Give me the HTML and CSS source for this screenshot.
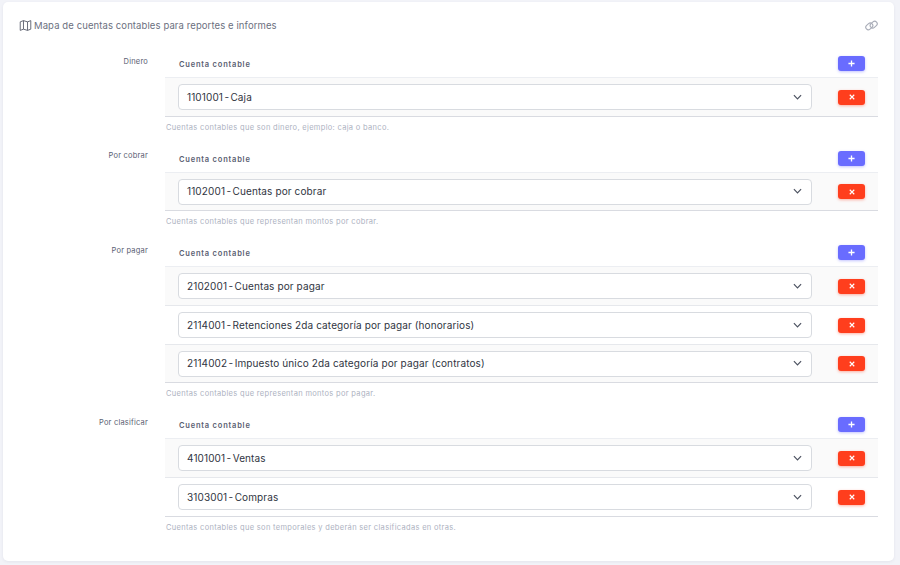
FILE: index.html
```html
<!DOCTYPE html>
<html lang="en">
<head>
    <meta charset="UTF-8">
    <title>Mapa de cuentas contables</title>
    <link rel="stylesheet" href="styles.css">
</head>
<body>

<div class="card">
    <div class="card-head">
        <h5>
            <svg class="map-icon" viewBox="0 0 16 16" width="13" height="13"><path d="M1.5 3.5 5.5 2 10.5 3.5 14.5 2V12.5L10.5 14 5.5 12.5 1.5 14ZM5.5 2V12.5M10.5 3.5V14" fill="none" stroke="currentColor" stroke-width="1.1" stroke-linejoin="round"/></svg>
            Mapa de cuentas contables para reportes e informes
        </h5>
        <svg class="link-icon" viewBox="0 0 16 16" width="13" height="13"><g fill="none" stroke="currentColor" stroke-width="1.4"><rect x="0.6" y="6" width="9.4" height="6.2" rx="3.1" transform="rotate(-42 5.3 9.1)"/><rect x="6" y="3.8" width="9.4" height="6.2" rx="3.1" transform="rotate(-42 10.7 6.9)"/></g></svg>
    </div>

    <div class="group">
        <label class="group-label">Dinero</label>
        <div class="group-body">
            <div class="head-row">
                <span>Cuenta contable</span>
                <div class="action"><button class="btn btn-add"><svg viewBox="0 0 8 8" width="7" height="7"><path d="M4 .5v7M.5 4h7"/></svg></button></div>
            </div>
            <div class="item-row">
                <div class="select"><span>1101001<span class="dash"> - </span>Caja</span><svg class="chevron" viewBox="0 0 10 6" width="9" height="6"><path d="M1 1l4 4 4-4"/></svg></div>
                <div class="action"><button class="btn btn-del"><svg viewBox="0 0 8 8" width="6" height="6"><path d="M1 1l6 6M7 1l-6 6"/></svg></button></div>
            </div>
            <p class="help">Cuentas contables que son dinero, ejemplo: caja o banco.</p>
        </div>
    </div>

    <div class="group">
        <label class="group-label">Por cobrar</label>
        <div class="group-body">
            <div class="head-row">
                <span>Cuenta contable</span>
                <div class="action"><button class="btn btn-add"><svg viewBox="0 0 8 8" width="7" height="7"><path d="M4 .5v7M.5 4h7"/></svg></button></div>
            </div>
            <div class="item-row">
                <div class="select"><span>1102001<span class="dash"> - </span>Cuentas por cobrar</span><svg class="chevron" viewBox="0 0 10 6" width="9" height="6"><path d="M1 1l4 4 4-4"/></svg></div>
                <div class="action"><button class="btn btn-del"><svg viewBox="0 0 8 8" width="6" height="6"><path d="M1 1l6 6M7 1l-6 6"/></svg></button></div>
            </div>
            <p class="help">Cuentas contables que representan montos por cobrar.</p>
        </div>
    </div>

    <div class="group">
        <label class="group-label">Por pagar</label>
        <div class="group-body">
            <div class="head-row">
                <span>Cuenta contable</span>
                <div class="action"><button class="btn btn-add"><svg viewBox="0 0 8 8" width="7" height="7"><path d="M4 .5v7M.5 4h7"/></svg></button></div>
            </div>
            <div class="item-row">
                <div class="select"><span>2102001<span class="dash"> - </span>Cuentas por pagar</span><svg class="chevron" viewBox="0 0 10 6" width="9" height="6"><path d="M1 1l4 4 4-4"/></svg></div>
                <div class="action"><button class="btn btn-del"><svg viewBox="0 0 8 8" width="6" height="6"><path d="M1 1l6 6M7 1l-6 6"/></svg></button></div>
            </div>
            <div class="item-row">
                <div class="select"><span>2114001<span class="dash"> - </span>Retenciones 2da categoría por pagar (honorarios)</span><svg class="chevron" viewBox="0 0 10 6" width="9" height="6"><path d="M1 1l4 4 4-4"/></svg></div>
                <div class="action"><button class="btn btn-del"><svg viewBox="0 0 8 8" width="6" height="6"><path d="M1 1l6 6M7 1l-6 6"/></svg></button></div>
            </div>
            <div class="item-row">
                <div class="select"><span>2114002<span class="dash"> - </span>Impuesto único 2da categoría por pagar (contratos)</span><svg class="chevron" viewBox="0 0 10 6" width="9" height="6"><path d="M1 1l4 4 4-4"/></svg></div>
                <div class="action"><button class="btn btn-del"><svg viewBox="0 0 8 8" width="6" height="6"><path d="M1 1l6 6M7 1l-6 6"/></svg></button></div>
            </div>
            <p class="help">Cuentas contables que representan montos por pagar.</p>
        </div>
    </div>

    <div class="group">
        <label class="group-label">Por clasificar</label>
        <div class="group-body">
            <div class="head-row">
                <span>Cuenta contable</span>
                <div class="action"><button class="btn btn-add"><svg viewBox="0 0 8 8" width="7" height="7"><path d="M4 .5v7M.5 4h7"/></svg></button></div>
            </div>
            <div class="item-row">
                <div class="select"><span>4101001<span class="dash"> - </span>Ventas</span><svg class="chevron" viewBox="0 0 10 6" width="9" height="6"><path d="M1 1l4 4 4-4"/></svg></div>
                <div class="action"><button class="btn btn-del"><svg viewBox="0 0 8 8" width="6" height="6"><path d="M1 1l6 6M7 1l-6 6"/></svg></button></div>
            </div>
            <div class="item-row">
                <div class="select"><span>3103001<span class="dash"> - </span>Compras</span><svg class="chevron" viewBox="0 0 10 6" width="9" height="6"><path d="M1 1l4 4 4-4"/></svg></div>
                <div class="action"><button class="btn btn-del"><svg viewBox="0 0 8 8" width="6" height="6"><path d="M1 1l6 6M7 1l-6 6"/></svg></button></div>
            </div>
            <p class="help">Cuentas contables que son temporales y deberán ser clasificadas en otras.</p>
        </div>
    </div>
</div>

</body>
</html>
```

FILE: styles.css
```css
body {
    font-family: Inter, "Noto Sans", sans-serif;
    background-color: #f2f3f8;
    margin: 0;
    padding: 2px 6px 4px 3px;
    height: 565px;
    box-sizing: border-box;
    overflow: hidden;
}

.card {
    background-color: #fff;
    border-radius: 5px;
    height: 559px;
    padding: 0 16px;
    box-sizing: border-box;
    box-shadow: 0 1px 3px rgba(60,70,100,0.08);
}

.card-head {
    display: flex;
    justify-content: space-between;
    align-items: center;
    height: 46px;
    margin-bottom: 2px;
}

.card-head h5 {
    display: flex;
    align-items: center;
    gap: 2px;
    margin: 0;
    font-size: 9.5px;
    font-weight: 400;
    letter-spacing: 0.1px;
    color: #6b7080;
}

.map-icon {
    color: #565b6a;
}

.link-icon {
    color: #a9adb8;
}

.group {
    display: flex;
}

.group-label {
    width: 129px;
    text-align: right;
    font-size: 7.5px;
    letter-spacing: 0.2px;
    color: #5a6072;
    padding-top: 6.5px;
    flex-shrink: 0;
}

.group-body {
    margin-left: 17px;
    width: 713px;
}

.head-row {
    display: flex;
    align-items: center;
    justify-content: space-between;
    height: 28px;
    box-sizing: border-box;
    padding-left: 14px;
    font-size: 7.5px;
    font-weight: 600;
    letter-spacing: 0.8px;
    color: #5a6072;
    border-bottom: 1px solid #eceef2;
}

.head-row > span {
    padding-top: 2px;
}

.item-row {
    display: flex;
    align-items: center;
    justify-content: space-between;
    height: 38.75px;
    box-sizing: border-box;
    padding: 1px 0 0 13px;
    border-bottom: 1px solid #e6e8ec;
}

.item-row:nth-child(even) {
    background-color: #fafafa;
}

.item-row:nth-last-child(2) {
    border-bottom-color: #d9dbe1;
}

.select {
    display: flex;
    align-items: center;
    justify-content: space-between;
    width: 634px;
    height: 26px;
    box-sizing: border-box;
    padding: 0 9px 1px 8px;
    background-color: #fff;
    border: 1px solid #d8dbe0;
    border-radius: 4px;
    font-size: 10px;
    letter-spacing: 0.12px;
    color: #2f3542;
}

.dash {
    word-spacing: -1.6px;
}

.chevron {
    fill: none;
    stroke: #4c5260;
    stroke-width: 1.3;
}

.action {
    width: 53px;
    display: flex;
    justify-content: center;
}

.btn {
    display: flex;
    align-items: center;
    justify-content: center;
    width: 27px;
    height: 15px;
    padding: 0;
    border: none;
    border-radius: 3px;
}

.btn svg {
    fill: none;
    stroke: #fff;
    stroke-width: 1.5;
}

.btn-add {
    background-color: #696cff;
    box-shadow: 0 1px 3px rgba(105,108,255,0.4);
}

.btn-del {
    background-color: #ff3e1d;
    box-shadow: 0 1px 3px rgba(255,62,29,0.4);
}

.help {
    margin: 0;
    height: 27.75px;
    padding: 6px 0 0 1px;
    box-sizing: border-box;
    font-size: 7.5px;
    letter-spacing: 0.32px;
    color: #adb2bf;
}
```
